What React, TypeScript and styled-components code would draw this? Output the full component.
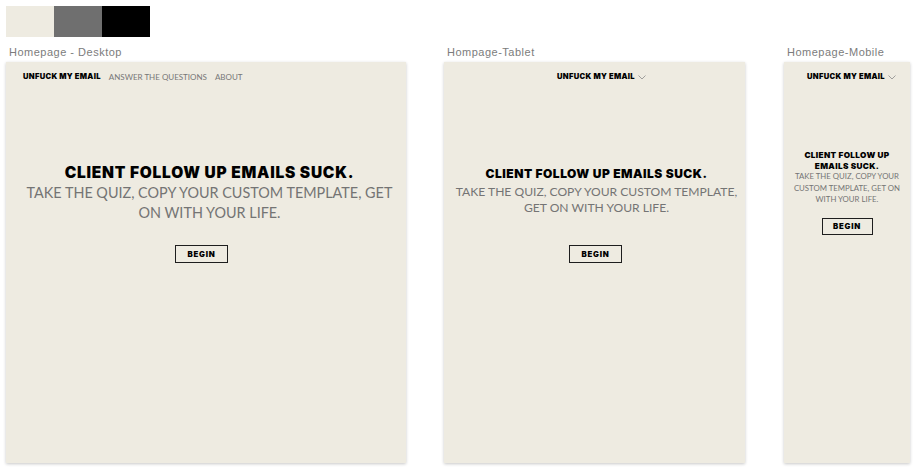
import styled, { createGlobalStyle } from 'styled-components';

type Variant = 'desktop' | 'tablet' | 'mobile';

const specs = {
  desktop: {
    width: 400,
    navJustify: 'flex-start',
    navPad: '9px 0 0 17px',
    heroPad: '80px 0 0 7px',
    h1: [15.5, 20, 0.75],
    sub: [14.4, 20],
    subTop: 0,
    btnTop: 22,
    btnRight: 16,
    btn: [53, 18],
  },
  tablet: {
    width: 301,
    navJustify: 'center',
    navPad: '9px 0 0 14px',
    heroPad: '83px 0 0 4px',
    h1: [12, 16, 0.5],
    sub: [12.1, 15.5],
    subTop: 2,
    btnTop: 30,
    btnRight: 2,
    btn: [53, 18],
  },
  mobile: {
    width: 126,
    navJustify: 'center',
    navPad: '9px 0 0 9px',
    heroPad: '67px 0 0 0',
    h1: [8.2, 10.5, 0.35],
    sub: [7.8, 11.5],
    subTop: 0,
    btnTop: 12,
    btnRight: 0,
    btn: [51, 17],
  },
};

const GlobalStyle = createGlobalStyle`
  body {
    margin: 0;
    background: #ffffff;
  }
`;

const Page = styled.div`
  padding: 6px;
`;

const Swatches = styled.div`
  display: flex;
`;

const Swatch = styled.div<{ $color: string }>`
  width: 48px;
  height: 31px;
  background: ${(p) => p.$color};
`;

const Boards = styled.div`
  display: flex;
  align-items: flex-start;
  margin-top: 8px;
`;

const Column = styled.div<{ $gap: number }>`
  display: flex;
  flex-direction: column;
  margin-right: ${(p) => p.$gap}px;
`;

const Label = styled.div`
  font-family: 'Liberation Sans', Arial, sans-serif;
  font-size: 11px;
  line-height: 14px;
  letter-spacing: 0.5px;
  color: #7c7c7c;
  padding-left: 3px;
  margin-bottom: 3px;
`;

const Frame = styled.div<{ $v: Variant }>`
  width: ${(p) => specs[p.$v].width}px;
  height: 401px;
  background: #eeebe1;
  box-shadow: 0 1px 3px rgba(0, 0, 0, 0.22);
  display: flex;
  flex-direction: column;
`;

const Nav = styled.nav<{ $v: Variant }>`
  display: flex;
  align-items: center;
  justify-content: ${(p) => specs[p.$v].navJustify};
  padding: ${(p) => specs[p.$v].navPad};
  height: 12px;
  gap: 8px;
`;

const Brand = styled.span`
  font-family: Inter, Lato, sans-serif;
  font-weight: 900;
  font-size: 7.6px;
  letter-spacing: 0.3px;
  line-height: 12px;
  color: #000;
  display: flex;
  align-items: center;
  gap: 3px;
`;

const NavLink = styled.span`
  font-family: Lato, 'Noto Sans', sans-serif;
  font-size: 8px;
  line-height: 12px;
  color: #777;
`;

const Hero = styled.div<{ $v: Variant }>`
  display: flex;
  flex-direction: column;
  align-items: center;
  text-align: center;
  padding: ${(p) => specs[p.$v].heroPad};
`;

const Heading = styled.h1<{ $v: Variant }>`
  margin: 0;
  font-family: Inter, Lato, sans-serif;
  font-weight: 900;
  font-size: ${(p) => specs[p.$v].h1[0]}px;
  line-height: ${(p) => specs[p.$v].h1[1]}px;
  letter-spacing: ${(p) => specs[p.$v].h1[2]}px;
  color: #000;
  white-space: pre-line;
`;

const Sub = styled.p<{ $v: Variant }>`
  margin: ${(p) => specs[p.$v].subTop}px 0 0;
  font-family: Lato, 'Noto Sans', sans-serif;
  font-weight: 400;
  font-size: ${(p) => specs[p.$v].sub[0]}px;
  line-height: ${(p) => specs[p.$v].sub[1]}px;
  color: #747474;
  white-space: pre-line;
`;

const Begin = styled.button<{ $v: Variant }>`
  box-sizing: border-box;
  margin: ${(p) => specs[p.$v].btnTop}px ${(p) => specs[p.$v].btnRight}px 0 0;
  width: ${(p) => specs[p.$v].btn[0]}px;
  height: ${(p) => specs[p.$v].btn[1]}px;
  padding: 0;
  background: transparent;
  border: 1.5px solid #1e1e1e;
  font-family: Inter, Lato, sans-serif;
  font-weight: 900;
  font-size: 7.8px;
  letter-spacing: 0.8px;
  color: #000;
`;

const Chevron = () => (
  <svg width="8" height="5" viewBox="0 0 8 5">
    <path d="M0.5 0.5 L4 4 L7.5 0.5" fill="none" stroke="#8a8a8a" strokeWidth="0.8" />
  </svg>
);

const copy = {
  desktop: {
    h1: 'CLIENT FOLLOW UP EMAILS SUCK.',
    sub: 'TAKE THE QUIZ, COPY YOUR CUSTOM TEMPLATE, GET\nON WITH YOUR LIFE.',
  },
  tablet: {
    h1: 'CLIENT FOLLOW UP EMAILS SUCK.',
    sub: 'TAKE THE QUIZ, COPY YOUR CUSTOM TEMPLATE,\nGET ON WITH YOUR LIFE.',
  },
  mobile: {
    h1: 'CLIENT FOLLOW UP\nEMAILS SUCK.',
    sub: 'TAKE THE QUIZ, COPY YOUR\nCUSTOM TEMPLATE, GET ON\nWITH YOUR LIFE.',
  },
};

const Board = ({ v, label, gap }: { v: Variant; label: string; gap: number }) => (
  <Column $gap={gap}>
    <Label>{label}</Label>
    <Frame $v={v}>
      <Nav $v={v}>
        {v === 'desktop' ? (
          <>
            <Brand>UNFUCK MY EMAIL</Brand>
            <NavLink>ANSWER THE QUESTIONS</NavLink>
            <NavLink>ABOUT</NavLink>
          </>
        ) : (
          <Brand>
            UNFUCK MY EMAIL <Chevron />
          </Brand>
        )}
      </Nav>
      <Hero $v={v}>
        <Heading $v={v}>{copy[v].h1}</Heading>
        <Sub $v={v}>{copy[v].sub}</Sub>
        <Begin $v={v}>BEGIN</Begin>
      </Hero>
    </Frame>
  </Column>
);

export default function App() {
  return (
    <Page>
      <GlobalStyle />
      <Swatches>
        <Swatch $color="#eeebe1" />
        <Swatch $color="#6f6f6f" />
        <Swatch $color="#000000" />
      </Swatches>
      <Boards>
        <Board v="desktop" label="Homepage - Desktop" gap={38} />
        <Board v="tablet" label="Hompage-Tablet" gap={39} />
        <Board v="mobile" label="Homepage-Mobile" gap={0} />
      </Boards>
    </Page>
  );
}
